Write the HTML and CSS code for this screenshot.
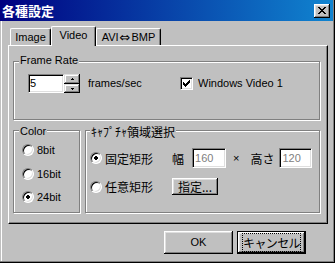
FILE: index.html
```html
<!DOCTYPE html>
<html lang="ja">
<head>
<meta charset="utf-8">
<title>各種設定</title>
<link rel="stylesheet" href="styles.css">
</head>
<body>
<div class="window">
  <div class="titlebar">
    <span class="title">各種設定</span>
    <span class="close"><svg width="8" height="7" viewBox="0 0 8 7" shape-rendering="crispEdges"><path d="M0 0h2v1H0zM6 0h2v1H6zM1 1h2v1H1zM5 1h2v1H5zM2 2h4v1H2zM3 3h2v1H3zM2 4h4v1H2zM1 5h2v1H1zM5 5h2v1H5zM0 6h2v1H0zM6 6h2v1H6z"/></svg></span>
  </div>
  <div class="tabs">
    <div class="tab t-image">Image</div>
    <div class="tab t-video">Video</div>
    <div class="tab t-avi">AVI<span class="arrow">⇔</span>BMP</div>
  </div>
  <div class="panel">
    <div class="group g-frame">
      <div class="legend lg-frame">Frame Rate</div>
      <div class="frame-row">
        <div class="edit e-fps">5</div>
        <div class="spin">
          <div class="spin-btn up"><svg width="3" height="2" viewBox="0 0 3 2" shape-rendering="crispEdges"><path d="M1 0h1v1H1zM0 1h3v1H0z"/></svg></div>
          <div class="spin-btn down"><svg width="3" height="2" viewBox="0 0 3 2" shape-rendering="crispEdges"><path d="M0 0h3v1H0zM1 1h1v1H1z"/></svg></div>
        </div>
        <span class="fps-label">frames/sec</span>
        <span class="check"><svg width="7" height="7" viewBox="0 0 7 7" shape-rendering="crispEdges"><path d="M6 0h1v1H6zM5 1h2v1H5zM0 2h1v1H0zM4 2h3v1H4zM0 3h2v1H0zM3 3h3v1H3zM0 4h5v1H0zM1 5h3v1H1zM2 6h1v1H2z"/></svg></span>
        <span class="check-label">Windows Video 1</span>
      </div>
    </div>
    <div class="row2">
      <div class="group g-color">
        <div class="legend lg-small">Color</div>
        <div class="radio-row rr1"><span class="radio"></span><span>8bit</span></div>
        <div class="radio-row rr2"><span class="radio"></span><span>16bit</span></div>
        <div class="radio-row rr3"><span class="radio"><svg class="dot" width="4" height="4" viewBox="0 0 4 4" shape-rendering="crispEdges"><path d="M1 0h2v1h1v2H3v1H1V3H0V1h1z"/></svg></span><span>24bit</span></div>
      </div>
      <div class="group g-cap">
        <div class="legend lg-small lg-cap jp">ｷｬﾌﾟﾁｬ領域選択</div>
        <div class="cap-row cr1">
          <div class="cap-opt"><span class="radio"><svg class="dot" width="4" height="4" viewBox="0 0 4 4" shape-rendering="crispEdges"><path d="M1 0h2v1h1v2H3v1H1V3H0V1h1z"/></svg></span><span class="jp">固定矩形</span></div>
          <span class="jp">幅</span>
          <div class="edit dis e-w">160</div>
          <span class="times">×</span>
          <span class="jp lbl-h">高さ</span>
          <div class="edit dis e-h">120</div>
        </div>
        <div class="cap-row cr2">
          <div class="cap-opt"><span class="radio"></span><span class="jp">任意矩形</span></div>
          <div class="btn b-spec jp">指定...</div>
        </div>
      </div>
    </div>
  </div>
  <div class="buttons">
    <div class="btn main">OK</div>
    <div class="btn main default"><span class="focus jp">キャンセル</span></div>
  </div>
</div>
</body>
</html>
```

FILE: styles.css
```css
* { box-sizing: border-box; }
html, body { margin: 0; padding: 0; }
body {
  width: 335px;
  height: 263px;
  overflow: hidden;
  background: #c0c0c0;
  color: #000;
  font-family: "Liberation Sans", Arial, "Noto Sans CJK JP", sans-serif;
  font-size: 11px;
  line-height: 13px;
}
.jp {
  font-family: "Noto Sans CJK JP", sans-serif;
  font-size: 12px;
}
.window {
  width: 335px;
  height: 263px;
  border-right: 1px solid #000;
  border-bottom: 1px solid #000;
  box-shadow: inset -1px -1px 0 #808080, inset 1px 0 0 #c0c0c0, inset 2px 0 0 #fff;
}
.titlebar {
  width: 333px;
  height: 21px;
  background: linear-gradient(90deg, #000080, #1084d0);
  display: flex;
  align-items: center;
  justify-content: space-between;
  padding: 0 3px 0 2px;
}
.title {
  color: #fff;
  font-family: "Noto Sans CJK JP", sans-serif;
  font-weight: bold;
  font-size: 13px;
  line-height: 15px;
}
.close {
  width: 16px;
  height: 14px;
  margin-top: 1px;
  background: #c0c0c0;
  box-shadow: inset -1px -1px 0 #000, inset 1px 1px 0 #fff, inset -2px -2px 0 #808080, inset 2px 2px 0 #dfdfdf;
  display: flex;
  align-items: center;
  justify-content: center;
  padding-bottom: 1px;
}
.close svg { display: block; }

.tabs {
  display: flex;
  align-items: flex-end;
  height: 19px;
  margin-top: 5px;
  padding-left: 10px;
}
.tab {
  height: 17px;
  border-top: 1px solid #fff;
  border-left: 1px solid #fff;
  border-right: 1px solid #000;
  border-radius: 2px 2px 0 0;
  box-shadow: inset -1px 0 0 #808080;
  display: flex;
  align-items: center;
  justify-content: center;
  background: #c0c0c0;
}
.t-image { width: 41px; }
.t-video {
  width: 45px;
  height: 20px;
  margin-bottom: -1px;
  padding-bottom: 2px;
  position: relative;
  z-index: 1;
}
.t-avi { width: 65px; }
.arrow {
  font-family: "DejaVu Sans", sans-serif;
  font-size: 13px;
  line-height: 13px;
  margin: 0 1px;
}

.panel {
  margin-left: 8px;
  width: 320px;
  height: 179px;
  border-top: 1px solid #fff;
  border-left: 1px solid #fff;
  border-right: 1px solid #000;
  border-bottom: 1px solid #000;
  box-shadow: inset -1px -1px 0 #808080;
  padding: 15px 0 0 4px;
}
.group {
  border: 1px solid #808080;
  box-shadow: 1px 1px 0 #fff, inset 1px 1px 0 #fff;
}
.legend {
  width: max-content;
  height: 13px;
  line-height: 13px;
  background: #c0c0c0;
  padding: 0 1px;
  margin: -8px 0 0 5px;
}
.lg-small { margin-top: -6px; }
.lg-cap { margin-left: 4px; }

.g-frame { width: 307px; height: 59px; }
.frame-row {
  display: flex;
  align-items: center;
  height: 19px;
  margin: 7px 0 0 14px;
}
.edit {
  background: #fff;
  border: 1px solid;
  border-color: #808080 #fff #fff #808080;
  box-shadow: inset 1px 1px 0 #000, inset -1px -1px 0 #dfdfdf;
  display: flex;
  align-items: center;
  padding-left: 2px;
}
.e-fps { width: 36px; height: 19px; padding-left: 1px; }
.spin {
  width: 16px;
  height: 19px;
  display: flex;
  flex-direction: column;
}
.spin-btn {
  background: #c0c0c0;
  box-shadow: inset -1px -1px 0 #000, inset 1px 1px 0 #dfdfdf, inset -2px -2px 0 #808080, inset 2px 2px 0 #fff;
  display: flex;
  align-items: center;
  justify-content: center;
}
.spin-btn svg { display: block; }
.spin-btn.up { height: 10px; }
.spin-btn.down { height: 9px; }
.fps-label { margin-left: 8px; width: 92px; }
.check {
  width: 13px;
  height: 13px;
  background: #fff;
  border: 1px solid;
  border-color: #808080 #fff #fff #808080;
  box-shadow: inset 1px 1px 0 #000, inset -1px -1px 0 #dfdfdf;
  display: flex;
  align-items: center;
  justify-content: center;
}
.check svg { display: block; }
.check-label { margin-left: 5px; }

.row2 {
  display: flex;
  gap: 5px;
  margin-top: 10px;
}
.g-color { width: 67px; height: 83px; }
.g-cap { width: 235px; height: 83px; }

.radio-row {
  display: flex;
  align-items: center;
  height: 16px;
  margin-left: 8px;
}
.rr1 { margin-top: 4px; }
.rr2 { margin-top: 8px; }
.rr3 { margin-top: 7px; }
.radio {
  width: 12px;
  height: 12px;
  flex: none;
  border-radius: 50%;
  background: #fff;
  border: 1px solid;
  border-color: #808080 #fff #fff #808080;
  box-shadow: inset 1px 1px 0 #000, inset -1px -1px 0 #dfdfdf;
  margin-right: 3px;
  display: flex;
  align-items: center;
  justify-content: center;
}
.dot { display: block; }

.cap-row {
  display: flex;
  align-items: center;
  margin-left: 4px;
}
.cr1 { height: 20px; margin-top: 10px; }
.cr2 { height: 17px; margin-top: 10px; }
.cap-opt {
  width: 82px;
  display: flex;
  align-items: center;
}
.e-w { width: 34px; height: 20px; margin-left: 8px; color: #808080; }
.times { margin-left: 7px; }
.lbl-h { margin-left: 11px; }
.e-h { width: 33px; height: 20px; margin-left: 5px; color: #808080; }

.btn {
  background: #c0c0c0;
  box-shadow: inset -1px -1px 0 #000, inset 1px 1px 0 #fff, inset -2px -2px 0 #808080, inset 2px 2px 0 #dfdfdf;
  display: flex;
  align-items: center;
  justify-content: center;
}
.b-spec { width: 46px; height: 17px; }

.buttons {
  display: flex;
  justify-content: flex-end;
  gap: 4px;
  margin-top: 7px;
  padding-right: 28px;
}
.main { width: 69px; height: 23px; }
.default { border: 1px solid #000; }
.focus {
  width: 59px;
  height: 19px;
  border: 1px dotted #000;
  display: flex;
  align-items: center;
  justify-content: center;
  letter-spacing: -0.6px;
  line-height: 15px;
}
```
